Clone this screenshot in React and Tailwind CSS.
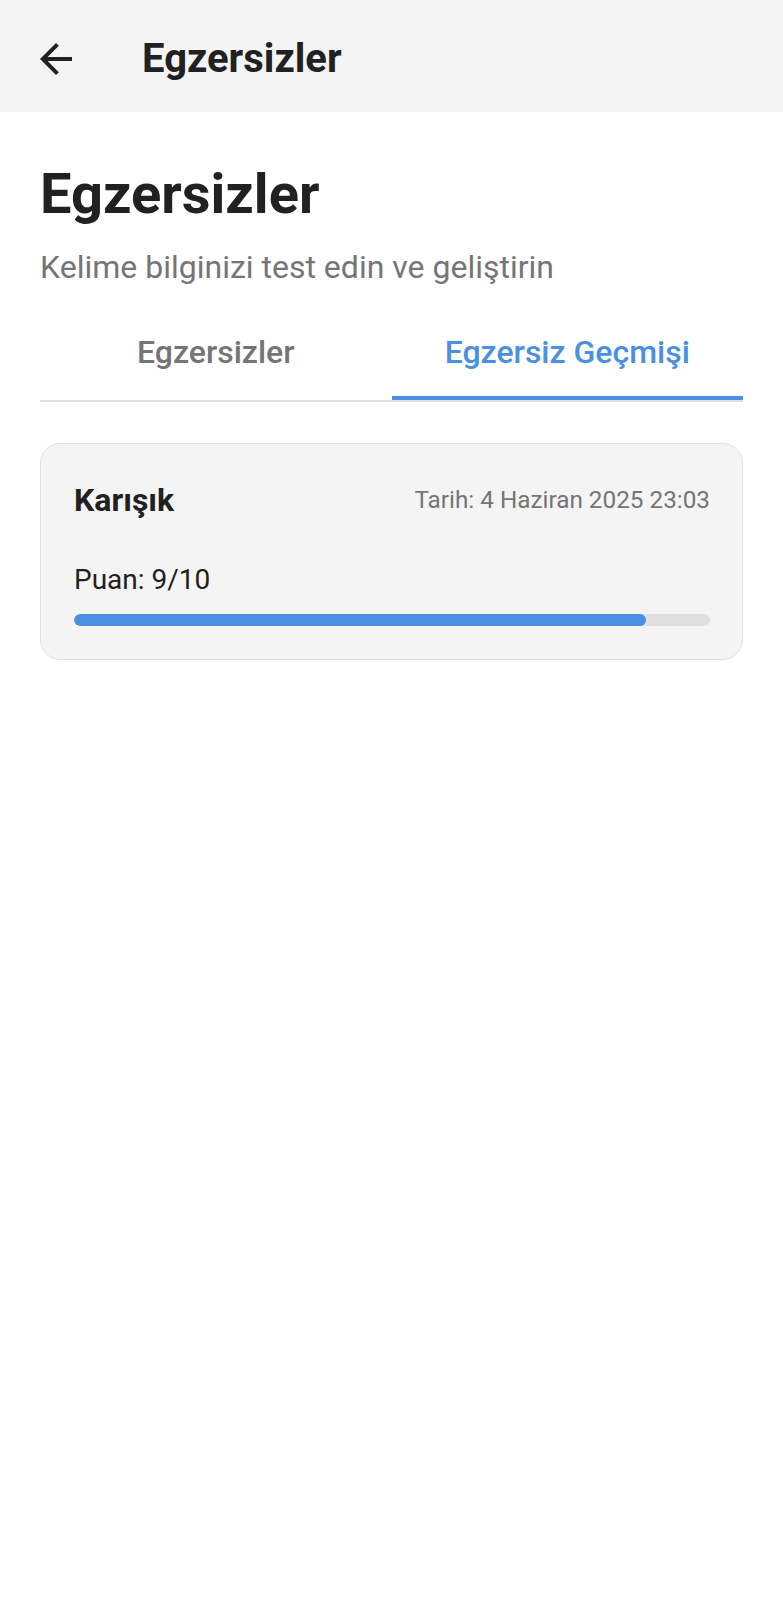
export default function App() {
  const font = { fontFamily: 'Roboto, "Noto Sans", sans-serif' };
  return (
    <div className="min-h-[1600px] w-[783px] bg-white text-[#212121]" style={font}>
      <div className="flex h-[112px] items-center bg-[#f4f4f4] pl-8 pt-[6px]">
        <svg width="48" height="48" viewBox="0 0 24 24" className="shrink-0">
          <path d="M20 11H7.83l5.59-5.59L12 4l-8 8 8 8 1.41-1.41L7.83 13H20v-2z" fill="#212121" />
        </svg>
        <div className="ml-[62px] text-[40px] font-bold leading-[48px]">Egzersizler</div>
      </div>
      <div className="px-10">
        <h1 className="mt-[50px] text-[56px] font-bold leading-[64px]">Egzersizler</h1>
        <p className="mt-[21px] text-[32px] leading-[40px] text-[#757575]">Kelime bilginizi test edin ve geliştirin</p>
        <div className="mt-[17px] flex border-b-2 border-[#e0e0e0]">
          <div className="flex h-[96px] flex-1 items-center justify-center text-[32px] font-medium text-[#757575]">Egzersizler</div>
          <div className="relative flex h-[96px] flex-1 items-center justify-center text-[32px] font-medium text-[#4a90e2]">
            Egzersiz Geçmişi
            <div className="absolute bottom-0 left-0 right-0 h-[4px] bg-[#4a90e2]" />
          </div>
        </div>
        <div className="mt-[41px] rounded-[20px] border border-[#e0e0e0] bg-[#f4f4f4] pb-[33px] pl-[33px] pr-8 pt-8">
          <div className="flex h-[48px] items-center justify-between">
            <div className="text-[32px] font-bold">Karışık</div>
            <div className="text-[24.3px] text-[#757575]">Tarih: 4 Haziran 2025 23:03</div>
          </div>
          <div className="mt-[38px] text-[28px] leading-[36px]">Puan: 9/10</div>
          <div className="mt-4 h-3 w-full overflow-hidden rounded-full bg-[#e0e0e0]">
            <div className="h-full rounded-full bg-[#4a90e2]" style={{ width: '90%' }} />
          </div>
        </div>
      </div>
    </div>
  );
}
